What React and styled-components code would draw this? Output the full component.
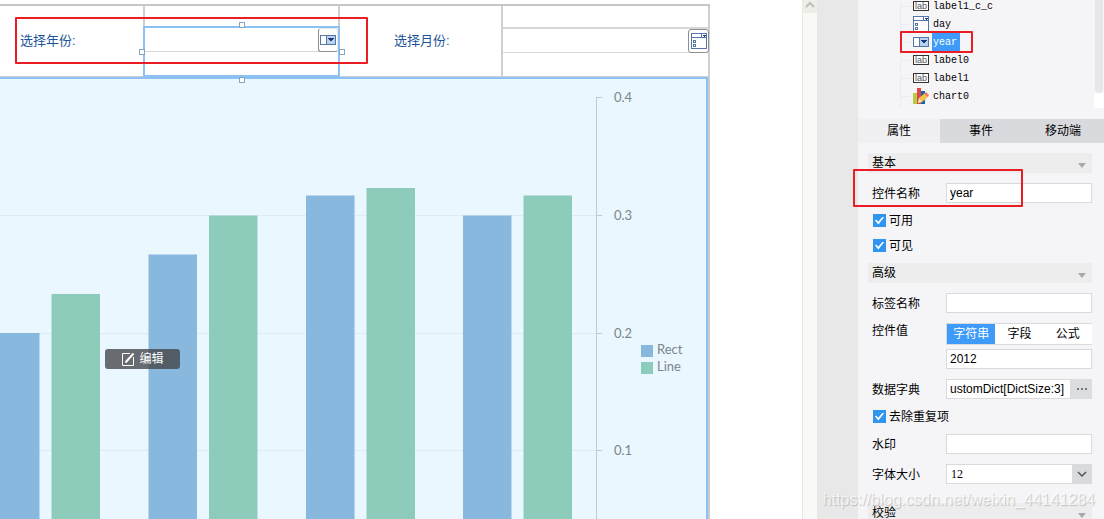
import React, { useState } from 'react';
import styled, { createGlobalStyle } from 'styled-components';

const blue = '#3f9bf9';
const selection = '#8cc1f6';
const line = '#d9dadc';
const sans = "'Liberation Sans', 'Noto Sans CJK SC', sans-serif";
const mono = "'Liberation Mono', monospace";

const GlobalStyle = createGlobalStyle`
  * {
    box-sizing: border-box;
  }

  body {
    margin: 0;
    background: #fff;
    color: #000;
    font: 12px/18px ${sans};
  }

  button, input, select {
    margin: 0;
    padding: 0;
    border: 0;
    border-radius: 0;
    color: inherit;
    font: inherit;
  }

  svg {
    flex: none;
  }
`;

const Designer = styled.div`
  position: relative;
  display: flex;
  height: 100vh;
  overflow: hidden;
`;

// Canvas

const Canvas = styled.main`
  flex: 1;
  min-width: 0;
  display: flex;
  padding: 4px 92px 0 0;
`;

const Sheet = styled.div`
  flex: 1;
  min-width: 0;
  display: flex;
  flex-direction: column;
  border-top: 2px solid #c6c6c6;
`;

const ParamRow = styled.div`
  position: relative;
  z-index: 1;
  display: grid;
  grid-template-columns: 145fr 195fr 163fr 207fr;
  height: 71px;
  border-bottom: 1px solid #d0d0d0;
`;

const Cell = styled.div`
  display: flex;
  flex-direction: column;
  min-width: 0;
  border-right: 2px solid #cfcfcf;
`;

const ParamLabel = styled.label`
  padding: 26px 0 0 ${p => p.$inset}px;
  color: #1b539c;
  font-size: 13px;
`;

const Selection = styled.div`
  position: relative;
  flex: 1;
  margin: 20px -2px -1px;
  border: 2px solid ${selection};
`;

const handlePlaces = {
  top: 'top: -6px; left: calc(50% - 3px);',
  bottom: 'bottom: -8px; left: calc(50% - 3px);',
  left: 'left: -6px; top: 21px;',
  right: 'right: -7px; top: 21px;'
};

const Handle = styled.i`
  position: absolute;
  z-index: 1;
  ${p => handlePlaces[p.$place]}
  width: 6px;
  height: 6px;
  border: 1px solid #84a5c4;
  background: #fff;
`;

const Widget = styled.div`
  display: flex;
  height: ${p => p.$framed ? 26 : 24}px;
  margin-top: ${p => p.$framed ? 21 : 0}px;
  margin-right: ${p => p.$framed ? -1 : 0}px;
  border-bottom: 1px solid #d6d6d6;
  border-top: ${p => p.$framed ? '2px solid #d6d6d6' : 0};
`;

const WidgetInput = styled.input`
  flex: 1;
  min-width: 0;
  padding: 0 4px;
  background: #fff;
  outline: 0;
`;

const WidgetButton = styled.button`
  display: grid;
  place-items: center;
  width: ${p => p.$wide ? 21 : 20}px;
  height: 24px;
  border: 1px solid #8e8e8e;
  border-color: ${p => p.$wide ? '#8e8e8e' : '#e4e4e4 #e4e4e4 #8e8e8e #8e8e8e'};
  border-radius: 3px;
  background: #fff;
`;

const ChartArea = styled.section`
  position: relative;
  flex: 1;
  min-height: 0;
  overflow: hidden;
  border: solid ${selection};
  border-width: 2px 2px 0 0;
  background: #eaf7fe;
`;

const ChartFrame = styled.div`
  flex: 1;
  min-height: 0;
  display: flex;
  border-right: 2px solid #cbcbcb;
`;

const ChartSvg = styled.svg`
  display: block;
  width: 100%;
  fill: #7c858c;
  font: 13px Lato, sans-serif;
`;

const EditButton = styled.button`
  position: absolute;
  top: 270px;
  left: 105px;
  display: flex;
  align-items: center;
  justify-content: center;
  gap: 4px;
  width: 75px;
  height: 20px;
  border-radius: 3px;
  background: rgba(66, 68, 70, 0.78);
  color: #fff;
`;

const Scroller = styled.div`
  width: 16px;
  border: solid #e8e8de;
  border-width: 0 1px;
  background: #f9f9f7;
`;

const ScrollUp = styled.button`
  display: grid;
  place-items: center;
  width: 100%;
  height: 13px;
  padding-bottom: 4px;
  background: #eeede8;
`;

const Gutter = styled.div`
  width: 40px;
  background: #e8e8e8;
`;

// Side panel

const Panel = styled.aside`
  width: 246px;
  background: #f5f5f8;
`;

const TreeArea = styled.div`
  display: flex;
  justify-content: space-between;
  height: 108px;
  margin-bottom: 11px;
  overflow: hidden;
`;

const Tree = styled.ul`
  flex: 1;
  margin: -3px 0 0 42px;
  padding: 0;
  height: 111px;
  border-left: 1px solid #ececee;
  list-style: none;
  font: 10px/18px ${mono};
`;

const TreeRow = styled.li`
  position: relative;
  display: flex;
  align-items: center;
  gap: 3px;
  height: 18px;

  &::before {
    content: '';
    width: 9px;
    border-top: 1px solid #ececee;
  }
`;

const TreeName = styled.span`
  padding: 1px ${p => p.$selected ? 3 : 1}px 0 1px;
  height: 18px;
  background: ${p => p.$selected ? blue : 'transparent'};
  color: ${p => p.$selected ? '#fff' : '#000'};
`;

const LabIcon = styled.span`
  width: 16px;
  height: 10px;
  border: 1px solid #333;
  background: #fff;
  color: #555;
  font: 9px/8px ${sans};
  text-align: center;
`;

const TreeScroll = styled.div`
  width: 10px;
  border-bottom: 15px solid #fff;

  &::before {
    content: '';
    display: block;
    height: 93px;
    margin: 0 1px;
    border-radius: 0 0 4px 4px;
    background: #e7e7e9;
  }
`;

const Tabs = styled.div`
  display: grid;
  grid-template-columns: repeat(3, 1fr);
  height: 24px;
`;

const Tab = styled.button`
  background: ${p => p.$active ? '#f0f0f2' : '#d9dadd'};
`;

const Form = styled.form`
  display: flex;
  flex-direction: column;
  gap: 10px;
  padding: 10px 12px 0 10px;
`;

const SectionHead = styled.button`
  display: flex;
  align-items: center;
  justify-content: space-between;
  height: 20px;
  margin-top: ${p => p.$last ? 9 : 0}px;
  padding: 0 6px 0 4px;
  background: #ededed;

  &::after {
    content: '';
    margin-top: 5px;
    border: solid transparent;
    border-width: 5px 4px 0;
    border-top-color: #a9a9a9;
  }
`;

const Field = styled.div`
  position: relative;
  display: grid;
  grid-template-columns: 74px 1fr;
  min-height: 20px;
  padding-left: 4px;
`;

const FieldLabel = styled.label`
  padding-top: ${p => p.$tight ? 0 : 2}px;
  line-height: ${p => p.$tight ? 16 : 18}px;
`;

const Stack = styled.div`
  display: grid;
  gap: 4px;
`;

const TextBox = styled.input`
  width: 100%;
  min-width: 0;
  height: 20px;
  padding: 0 3px;
  border: 1px solid ${line};
  background: #fff;
  outline: 0;
`;

const Joined = styled.div`
  display: grid;
  grid-template-columns: 1fr 21px;
`;

const MoreButton = styled.button`
  display: grid;
  place-items: center;
  height: 20px;
  background: #dcdde0;
`;

const Segments = styled.div`
  display: grid;
  grid-template-columns: repeat(3, 1fr);
  height: 22px;
  border: solid ${line};
  border-width: 1px 0 1px 1px;
`;

const Segment = styled.button`
  background: ${p => p.$active ? blue : '#fff'};
  color: ${p => p.$active ? '#fff' : '#000'};
`;

const CheckLabel = styled.label`
  display: flex;
  align-items: center;
  gap: 3px;
  height: 15px;
  padding-left: 5px;
`;

const CheckBox = styled.input`
  appearance: none;
  display: grid;
  place-items: center;
  width: 13px;
  height: 13px;
  border: 1px solid #2f95f1;
  background: #fff;

  &:checked {
    background: #2f95f1;
  }

  &:checked::after {
    content: '';
    width: 9px;
    height: 8px;
    background: #fff;
    clip-path: polygon(0 50%, 14% 38%, 36% 66%, 86% 0, 100% 10%, 38% 100%);
  }
`;

const SelectWrap = styled.div`
  position: relative;
  height: 20px;
`;

const SizeSelect = styled.select`
  appearance: none;
  width: 100%;
  height: 20px;
  padding: 0 24px 0 4px;
  border: 1px solid ${line};
  background: #fff;
  font: 12px 'Liberation Serif', serif;
`;

const SelectArrow = styled.span`
  position: absolute;
  top: 0;
  right: 0;
  display: grid;
  place-items: center;
  width: 20px;
  height: 20px;
  background: #d9dadd;
  pointer-events: none;
`;

const Mark = styled.div`
  position: absolute;
  z-index: 2;
  top: ${p => p.$top}px;
  left: ${p => p.$left}px;
  width: ${p => p.$width}px;
  height: ${p => p.$height}px;
  border: 2px solid #ea1c24;
  border-radius: 1px;
  pointer-events: none;
`;

const Watermark = styled.div`
  position: absolute;
  right: 9px;
  bottom: 7px;
  color: rgba(255, 255, 255, 0.7);
  font: 16px/24px 'Liberation Sans', sans-serif;
  text-shadow: 1px 1px 1px rgba(120, 120, 120, 0.4);
  pointer-events: none;
`;

const ComboIcon = () => (
  <svg width='16' height='10' shapeRendering='crispEdges'>
    <rect x='0.5' y='0.5' width='15' height='9' fill='#fff' stroke='#5676a8' />
    <rect x='6.5' y='0.5' width='9' height='9' fill='#b8d2ef' stroke='#5676a8' />
    <path d='M8 3h6v1h-1v1h-1v1h-2v-1h-1v-1h-1z' fill='#1c3a7a' />
  </svg>
);

const ListIcon = () => (
  <svg width='16' height='16' shapeRendering='crispEdges'>
    <path d='M0.5 0.5h15v15h-15zM0.5 4.5h15M10.5 0.5v4' fill='#fff' stroke='#5676a8' />
    <path d='M12 2h3v1h-1v1h-1v-1h-1z' fill='#1c3a7a' />
    <path d='M2.5 7.5h2v2h-2zM2.5 11.5h2v2h-2z' fill='none' stroke='#5676a8' />
  </svg>
);

const ChartIcon = () => (
  <svg width='16' height='16'>
    <path d='M0 5h4v11h-4z' fill='#b6cc43' />
    <path d='M4 0h4v16h-4z' fill='#e7434a' />
    <path d='M8 3h4v13h-4z' fill='#1068a8' />
    <path d='M5 15l1-5 6-5 3 4-6 5z' fill='#f6bf52' />
    <path d='M11 6l2-2 3 3-1 2z' fill='#ef7a62' />
    <path d='M5 15l1-5 3 4z' fill='#fae2b2' />
  </svg>
);

const Chevron = ({ up, color }) => (
  <svg width='10' height='8' fill='none' stroke={color} strokeWidth={up ? 2 : 1.5}>
    <path d={up ? 'M1 6l4-4 4 4' : 'M1 2l4 4 4-4'} />
  </svg>
);

const EditIcon = () => (
  <svg width='14' height='15' fill='none' stroke='#fff'>
    <path d='M9 1.5H1.5v12h11V5' />
    <path d='M4.5 10.5l8-9' strokeWidth='2' />
  </svg>
);

const bars = [
  { x: -9, rect: 254, lineTop: 215 },
  { x: 148.5, rect: 175.5, lineTop: 136.5 },
  { x: 306, rect: 116.5, lineTop: 109 },
  { x: 463, rect: 136.5, lineTop: 116.5 }
];

const ticks = [
  { label: '0.4', y: 18.5 },
  { label: '0.3', y: 136.5 },
  { label: '0.2', y: 254.5 },
  { label: '0.1', y: 371.5 }
];

const Chart = () => (
  <ChartSvg viewBox='0 0 706 440'>
    {ticks.slice(1).map(t => (
      <path key={t.label} d={`M0 ${t.y}H596`} stroke='#dcecf2' />
    ))}
    {bars.map(b => (
      <React.Fragment key={b.x}>
        <rect x={b.x} y={b.rect} width='48.5' height={440 - b.rect} fill='#89b8df' />
        <rect x={b.x + 60.5} y={b.lineTop} width='48.5' height={440 - b.lineTop} fill='#8dccba' />
      </React.Fragment>
    ))}
    <path d='M596.5 18v422' stroke='#bccad1' />
    {ticks.map(t => (
      <React.Fragment key={t.label}>
        <path d={`M597 ${t.y}h5`} stroke='#bccad1' />
        <text x='614' y={t.y + 4}>{t.label}</text>
      </React.Fragment>
    ))}
    <rect x='641' y='266' width='12' height='12' fill='#89b8df' />
    <text x='657' y='275'>Rect</text>
    <rect x='641' y='283' width='12' height='12' fill='#8dccba' />
    <text x='657' y='292'>Line</text>
  </ChartSvg>
);

const treeItems = [
  { name: 'label1_c_c', icon: <LabIcon>lab</LabIcon> },
  { name: 'day', icon: <ListIcon /> },
  { name: 'year', icon: <ComboIcon />, selected: true },
  { name: 'label0', icon: <LabIcon>lab</LabIcon> },
  { name: 'label1', icon: <LabIcon>lab</LabIcon> },
  { name: 'chart0', icon: <ChartIcon /> }
];

const Check = ({ children }) => (
  <CheckLabel>
    <CheckBox type='checkbox' defaultChecked />
    <span>{children}</span>
  </CheckLabel>
);

const Properties = () => {
  const [valueType, setValueType] = useState('字符串');

  return (
    <Form>
      <SectionHead type='button'>基本</SectionHead>
      <Field>
        <FieldLabel htmlFor='widget-name'>控件名称</FieldLabel>
        <TextBox id='widget-name' defaultValue='year' />
        <Mark $top={-14} $left={-15} $width={170} $height={38} />
      </Field>
      <Check>可用</Check>
      <Check>可见</Check>

      <SectionHead type='button'>高级</SectionHead>
      <Field>
        <FieldLabel htmlFor='label-name'>标签名称</FieldLabel>
        <TextBox id='label-name' />
      </Field>
      <Field>
        <FieldLabel htmlFor='widget-value' $tight>控件值</FieldLabel>
        <Stack>
          <Segments>
            {['字符串', '字段', '公式'].map(type => (
              <Segment
                key={type}
                type='button'
                $active={type === valueType}
                onClick={() => setValueType(type)}
              >
                {type}
              </Segment>
            ))}
          </Segments>
          <TextBox id='widget-value' defaultValue='2012' />
        </Stack>
      </Field>
      <Field>
        <FieldLabel htmlFor='dict'>数据字典</FieldLabel>
        <Joined>
          <TextBox id='dict' defaultValue='ustomDict[DictSize:3]' />
          <MoreButton type='button' aria-label='数据字典'>
            <svg width='12' height='4' fill='#777'>
              <path d='M1 1h2v2h-2zM5 1h2v2h-2zM9 1h2v2h-2z' />
            </svg>
          </MoreButton>
        </Joined>
      </Field>
      <Check>去除重复项</Check>
      <Field>
        <FieldLabel htmlFor='placeholder'>水印</FieldLabel>
        <TextBox id='placeholder' />
      </Field>
      <Field>
        <FieldLabel htmlFor='font-size'>字体大小</FieldLabel>
        <SelectWrap>
          <SizeSelect id='font-size'>
            <option>12</option>
          </SizeSelect>
          <SelectArrow><Chevron color='#555' /></SelectArrow>
        </SelectWrap>
      </Field>

      <SectionHead type='button' $last>校验</SectionHead>
    </Form>
  );
};

export default function App () {
  const [tab, setTab] = useState('属性');

  return (
    <Designer>
      <GlobalStyle />
      <Canvas>
        <Sheet>
          <ParamRow>
            <Cell>
              <ParamLabel htmlFor='year' $inset={20}>选择年份:</ParamLabel>
            </Cell>
            <Cell>
              <Selection>
                <Widget>
                  <WidgetInput id='year' />
                  <WidgetButton type='button' aria-label='year'><ComboIcon /></WidgetButton>
                </Widget>
                {Object.keys(handlePlaces).map(place => (
                  <Handle key={place} $place={place} />
                ))}
              </Selection>
            </Cell>
            <Cell>
              <ParamLabel htmlFor='month' $inset={54}>选择月份:</ParamLabel>
            </Cell>
            <Cell>
              <Widget $framed>
                <WidgetInput id='month' />
                <WidgetButton type='button' aria-label='month' $wide><ListIcon /></WidgetButton>
              </Widget>
            </Cell>
            <Mark $top={11} $left={15} $width={353} $height={47} />
          </ParamRow>
          <ChartFrame>
            <ChartArea>
              <Chart />
              <EditButton type='button'>
                <EditIcon />
                编辑
              </EditButton>
            </ChartArea>
          </ChartFrame>
        </Sheet>
      </Canvas>
      <Scroller>
        <ScrollUp type='button' aria-label='up'><Chevron up color='#bdbdbd' /></ScrollUp>
      </Scroller>
      <Gutter />
      <Panel>
        <TreeArea>
          <Tree>
            {treeItems.map(item => (
              <TreeRow key={item.name}>
                {item.icon}
                <TreeName $selected={item.selected}>{item.name}</TreeName>
                {item.selected && <Mark $top={-2} $left={-1} $width={73} $height={22} />}
              </TreeRow>
            ))}
          </Tree>
          <TreeScroll />
        </TreeArea>
        <Tabs>
          {['属性', '事件', '移动端'].map(name => (
            <Tab key={name} type='button' $active={name === tab} onClick={() => setTab(name)}>
              {name}
            </Tab>
          ))}
        </Tabs>
        <Properties />
      </Panel>
      <Watermark>https://blog.csdn.net/weixin_44141284</Watermark>
    </Designer>
  );
}
